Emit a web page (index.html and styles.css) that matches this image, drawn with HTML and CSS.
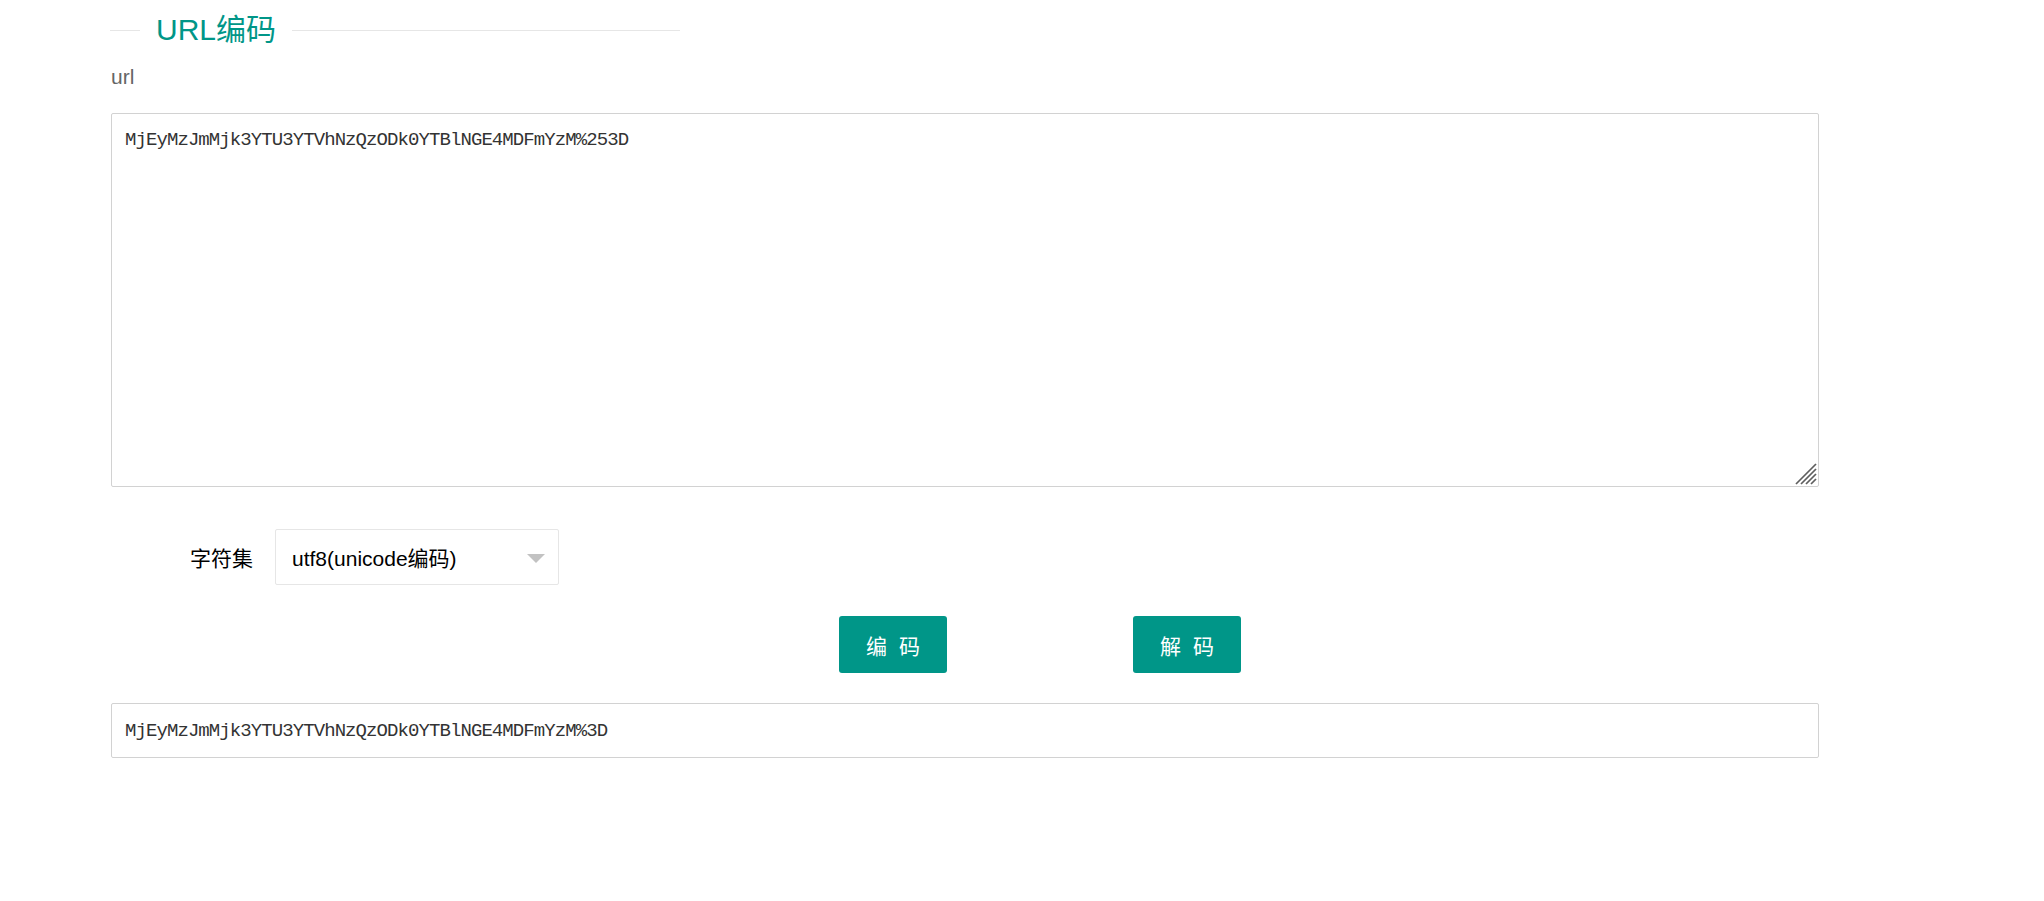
FILE: index.html
```html
<!DOCTYPE html>
<html lang="zh-CN">
<head>
<meta charset="utf-8">
<title>URL编码</title>
<link rel="stylesheet" href="styles.css">
</head>
<body>
<div class="page">
  <div class="title"><span class="title-text">URL编码</span></div>
  <div class="field-label">url</div>
  <div class="src-wrap">
    <textarea class="src" spellcheck="false">MjEyMzJmMjk3YTU3YTVhNzQzODk0YTBlNGE4MDFmYzM%253D</textarea>
    <svg class="grip" width="22" height="22" viewBox="0 0 22 22" aria-hidden="true">
      <g stroke="#5f5f5f" stroke-width="1.7" stroke-linecap="butt">
        <line x1="1" y1="21" x2="21" y2="1"/>
        <line x1="6" y1="21" x2="21" y2="6"/>
        <line x1="11" y1="21" x2="21" y2="11"/>
        <line x1="16" y1="21" x2="21" y2="16"/>
      </g>
    </svg>
  </div>
  <div class="row">
    <label class="row-label">字符集</label>
    <div class="select"><span>utf8(unicode编码)</span><i class="caret"></i></div>
  </div>
  <div class="btns">
    <button class="btn">编 码</button>
    <button class="btn">解 码</button>
  </div>
  <input class="out" type="text" value="MjEyMzJmMjk3YTU3YTVhNzQzODk0YTBlNGE4MDFmYzM%3D">
</div>
</body>
</html>
```

FILE: styles.css
```css
html, body {
  margin: 0;
  padding: 0;
  background: #fff;
}
body {
  font-family: "Liberation Sans", "Noto Sans CJK SC", sans-serif;
  color: #000;
}
.page {
  padding: 12px 0 0 111px;
  width: 1708px;
  display: flex;
  flex-direction: column;
  align-items: flex-start;
}
.title {
  display: flex;
  align-items: center;
  width: 570px;
  margin-left: -1px;
  height: 36px;
}
.title::before {
  content: "";
  width: 30px;
  height: 1px;
  background: #e6e6e6;
}
.title::after {
  content: "";
  flex: 1;
  height: 1px;
  background: #e6e6e6;
}
.title-text {
  padding: 0 16px;
  font-size: 30px;
  line-height: 36px;
  color: #009688;
}
.field-label {
  margin-top: 14px;
  font-size: 21px;
  line-height: 30px;
  color: #666;
}
.src-wrap {
  margin-top: 21px;
  position: relative;
  width: 1708px;
  height: 374px;
}
.src {
  display: block;
  box-sizing: border-box;
  width: 100%;
  height: 100%;
  margin: 0;
  border: 1px solid #d2d2d2;
  border-radius: 2px;
  padding: 15px 13px;
  font-family: "Liberation Mono", monospace;
  font-size: 19px;
  line-height: 22px;
  letter-spacing: -0.92px;
  color: #333;
  outline: none;
  resize: none;
}
.grip {
  position: absolute;
  right: 2px;
  bottom: 2px;
}
.row {
  margin-top: 42px;
  display: flex;
  align-items: center;
  height: 56px;
}
.row-label {
  width: 164px;
  padding-right: 22px;
  box-sizing: border-box;
  text-align: right;
  font-size: 21px;
  color: #000;
}
.select {
  box-sizing: border-box;
  width: 284px;
  height: 56px;
  border: 1px solid #e6e6e6;
  border-radius: 2px;
  padding: 0 13px 0 16px;
  display: flex;
  align-items: center;
  justify-content: space-between;
  font-size: 21px;
  color: #000;
}
.caret {
  width: 0;
  height: 0;
  border-left: 9px solid transparent;
  border-right: 9px solid transparent;
  border-top: 9px solid #c2c2c2;
  margin-top: 3px;
}
.btns {
  margin-top: 31px;
  padding-left: 728px;
  display: flex;
  gap: 186px;
}
.btn {
  width: 108px;
  height: 57px;
  border: none;
  border-radius: 3px;
  background: #009688;
  color: #fff;
  font-family: "Liberation Sans", "Noto Sans CJK SC", sans-serif;
  font-size: 21px;
  word-spacing: 6px;
  padding: 0;
  cursor: pointer;
}
.out {
  margin-top: 30px;
  box-sizing: border-box;
  width: 1708px;
  height: 55px;
  border: 1px solid #d2d2d2;
  border-radius: 2px;
  padding: 0 13px;
  font-family: "Liberation Mono", monospace;
  font-size: 19px;
  letter-spacing: -0.92px;
  color: #333;
  outline: none;
}
```
